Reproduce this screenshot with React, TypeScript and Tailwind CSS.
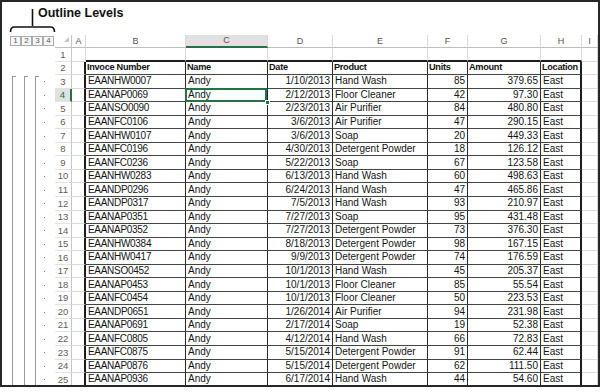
import React from "react";

const data: string[][] = [
  ["EAANHW0007", "Andy", "1/10/2013", "Hand Wash", "85", "379.65", "East"],
  ["EAANAP0069", "Andy", "2/12/2013", "Floor Cleaner", "42", "97.30", "East"],
  ["EAANSO0090", "Andy", "2/23/2013", "Air Purifier", "84", "480.80", "East"],
  ["EAANFC0106", "Andy", "3/6/2013", "Air Purifier", "47", "290.15", "East"],
  ["EAANHW0107", "Andy", "3/6/2013", "Soap", "20", "449.33", "East"],
  ["EAANFC0196", "Andy", "4/30/2013", "Detergent Powder", "18", "126.12", "East"],
  ["EAANFC0236", "Andy", "5/22/2013", "Soap", "67", "123.58", "East"],
  ["EAANHW0283", "Andy", "6/13/2013", "Hand Wash", "60", "498.63", "East"],
  ["EAANDP0296", "Andy", "6/24/2013", "Hand Wash", "47", "465.86", "East"],
  ["EAANDP0317", "Andy", "7/5/2013", "Hand Wash", "93", "210.97", "East"],
  ["EAANAP0351", "Andy", "7/27/2013", "Soap", "95", "431.48", "East"],
  ["EAANAP0352", "Andy", "7/27/2013", "Detergent Powder", "73", "376.30", "East"],
  ["EAANHW0384", "Andy", "8/18/2013", "Detergent Powder", "98", "167.15", "East"],
  ["EAANHW0417", "Andy", "9/9/2013", "Detergent Powder", "74", "176.59", "East"],
  ["EAANSO0452", "Andy", "10/1/2013", "Hand Wash", "45", "205.37", "East"],
  ["EAANAP0453", "Andy", "10/1/2013", "Floor Cleaner", "85", "55.54", "East"],
  ["EAANFC0454", "Andy", "10/1/2013", "Floor Cleaner", "50", "223.53", "East"],
  ["EAANDP0651", "Andy", "1/26/2014", "Air Purifier", "94", "231.98", "East"],
  ["EAANAP0691", "Andy", "2/17/2014", "Soap", "19", "52.38", "East"],
  ["EAANFC0805", "Andy", "4/12/2014", "Hand Wash", "66", "72.83", "East"],
  ["EAANFC0875", "Andy", "5/15/2014", "Detergent Powder", "91", "62.44", "East"],
  ["EAANAP0876", "Andy", "5/15/2014", "Detergent Powder", "62", "111.50", "East"],
  ["EAANAP0936", "Andy", "6/17/2014", "Hand Wash", "44", "54.60", "East"],
];

const headers = ["Invoce Number", "Name", "Date", "Product", "Units", "Amount", "Location"];
const letters = ["A", "B", "C", "D", "E", "F", "G", "H", "I"];
const W = [
  "w-[14px] shrink-0",
  "w-[100px] shrink-0",
  "w-[82px] shrink-0",
  "w-[65px] shrink-0",
  "w-[95px] shrink-0",
  "w-[40px] shrink-0",
  "w-[73px] shrink-0",
  "w-[41px] shrink-0",
  "flex-1 min-w-0",
];
// alignment for columns index 0..8 (A..I); true = right aligned
const RIGHT = [false, false, false, true, false, true, true, false, false];

function rightBorder(r: number, c: number) {
  const inT = r >= 2 && c >= 1 && c <= 7;
  if (c === 0 && r >= 2) return "border-r-2 border-r-[#1c1c1c]";
  if (inT && c === 7) return "border-r-2 border-r-[#1c1c1c]";
  if (inT) return "border-r border-r-[#2a2a2a]";
  return "border-r border-r-[#dadada]";
}

function bottomBorder(r: number, c: number) {
  const inT = r >= 2 && c >= 1 && c <= 7;
  if (r === 1 && c >= 1 && c <= 7) return "border-b-2 border-b-[#1c1c1c]";
  if (inT) return "border-b border-b-[#444]";
  return "border-b border-b-[#dadada]";
}

function cellText(r: number, c: number): string {
  if (c < 1 || c > 7) return "";
  if (r === 2) return headers[c - 1];
  if (r >= 3) return data[r - 3][c - 1];
  return "";
}

const rowNums = Array.from({ length: 25 }, (_, i) => i + 1);

export default function App() {
  return (
    <div className="w-[600px] h-[392px] bg-white font-['Liberation_Sans',Arial,sans-serif] text-[#141414]">
      <div className="w-[600px] h-[387px] border-2 border-[#262626] overflow-hidden flex flex-col">
        {/* Title / annotation */}
        <div className="relative h-[33px] shrink-0 pt-[5px] pl-[36px]">
          <svg className="absolute left-0 top-0" width="60" height="33" viewBox="0 0 60 33">
            <path d="M30.5 7 L30.5 24" stroke="#111" strokeWidth="1.6" fill="none" />
            <path d="M8.5 30 Q8.5 25 12.5 25 L48.5 25 Q52.5 25 52.5 30" stroke="#111" strokeWidth="1.6" fill="none" />
          </svg>
          <div className="text-[12.5px] leading-none font-bold text-[#111]">Outline Levels</div>
        </div>

        <div className="flex flex-1 min-h-0">
          {/* Outline gutter */}
          <div className="w-[53px] shrink-0 flex flex-col">
            <div className="h-[13px] shrink-0 flex items-start pt-[1px] pl-[8px]">
              {["1", "2", "3", "4"].map((n) => (
                <div
                  key={n}
                  className="w-[11px] h-[10px] border border-[#ababab] bg-[#f7f7f7] flex items-center justify-center text-[8px] leading-none text-[#5a5a5a]"
                >
                  {n}
                </div>
              ))}
            </div>
            <div className="h-[27.1px] shrink-0" />
            <div className="flex flex-1 min-h-0 pl-[10px]">
              <div className="w-[4px] mt-[1px] border-l border-t border-[#9a9a9a] shrink-0" />
              <div className="w-[4px] mt-[1px] ml-[8px] border-l border-t border-[#9a9a9a] shrink-0" />
              <div className="w-[4px] mt-[1px] ml-[7px] border-l border-t border-[#9a9a9a] shrink-0" />
              <div className="ml-[5px] w-[2px] flex flex-col">
                {Array.from({ length: 23 }, (_, i) => (
                  <div key={i} className="h-[13.55px] shrink-0 flex items-center">
                    <div className="w-[1px] h-[1px] bg-[#7a7a7a]" />
                  </div>
                ))}
              </div>
            </div>
          </div>

          {/* Sheet */}
          <div className="flex-1 min-w-0 flex flex-col">
            {/* Column headers */}
            <div className="flex h-[13px] shrink-0">
              <div className="relative w-[17px] shrink-0 border-r border-r-[#c6c6c6] border-b border-b-[#bdbdbd]">
                <svg className="absolute right-[2px] bottom-[5px]" width="5" height="5" viewBox="0 0 5 5">
                  <polygon points="5,0 5,5 0,5" fill="#c4c4c4" />
                </svg>
              </div>
              {letters.map((L, i) => (
                <div
                  key={L}
                  className={`${W[i]} flex items-center justify-center border-r border-r-[#dadada] text-[9px] leading-none text-[#555] ${
                    L === "C" ? "bg-[#e1e1e1] border-b-2 border-b-[#217346]" : "border-b border-b-[#bdbdbd]"
                  }`}
                >
                  {L}
                </div>
              ))}
            </div>

            {rowNums.map((r) => (
              <div key={r} className="flex h-[13.55px] shrink-0">
                <div
                  className={`w-[17px] shrink-0 flex items-center justify-center text-[9.5px] leading-none border-b border-b-[#e2e2e2] ${
                    r === 4
                      ? "bg-[#e1e1e1] border-r-2 border-r-[#217346] text-[#217346]"
                      : "border-r border-r-[#c6c6c6] text-[#5e5e5e]"
                  }`}
                >
                  {r}
                </div>
                {letters.map((L, c) => {
                  const txt = cellText(r, c);
                  const isHeader = r === 2;
                  const right = !isHeader && RIGHT[c];
                  const selected = r === 4 && c === 2;
                  return (
                    <div
                      key={L}
                      className={`${W[c]} relative flex items-center overflow-hidden whitespace-nowrap leading-none ${rightBorder(r, c)} ${bottomBorder(r, c)} ${
                        right ? "justify-end pr-[2px]" : isHeader ? "pl-[1px]" : "pl-[2px]"
                      } ${isHeader ? "font-bold text-[9.2px] tracking-[-0.3px]" : "text-[10px]"} ${
                        c === 1 && !isHeader ? "tracking-[-0.3px]" : ""
                      } ${selected ? "overflow-visible z-10" : ""}`}
                    >
                      {txt}
                      {selected && (
                        <>
                          <div className="absolute left-[-1px] top-[-1px] right-[0px] bottom-[-1px] border-2 border-[#217346]" />
                          <div className="absolute right-[-3px] bottom-[-4px] w-[5px] h-[5px] bg-[#217346] border border-white" />
                        </>
                      )}
                    </div>
                  );
                })}
              </div>
            ))}
          </div>
        </div>
      </div>
    </div>
  );
}
